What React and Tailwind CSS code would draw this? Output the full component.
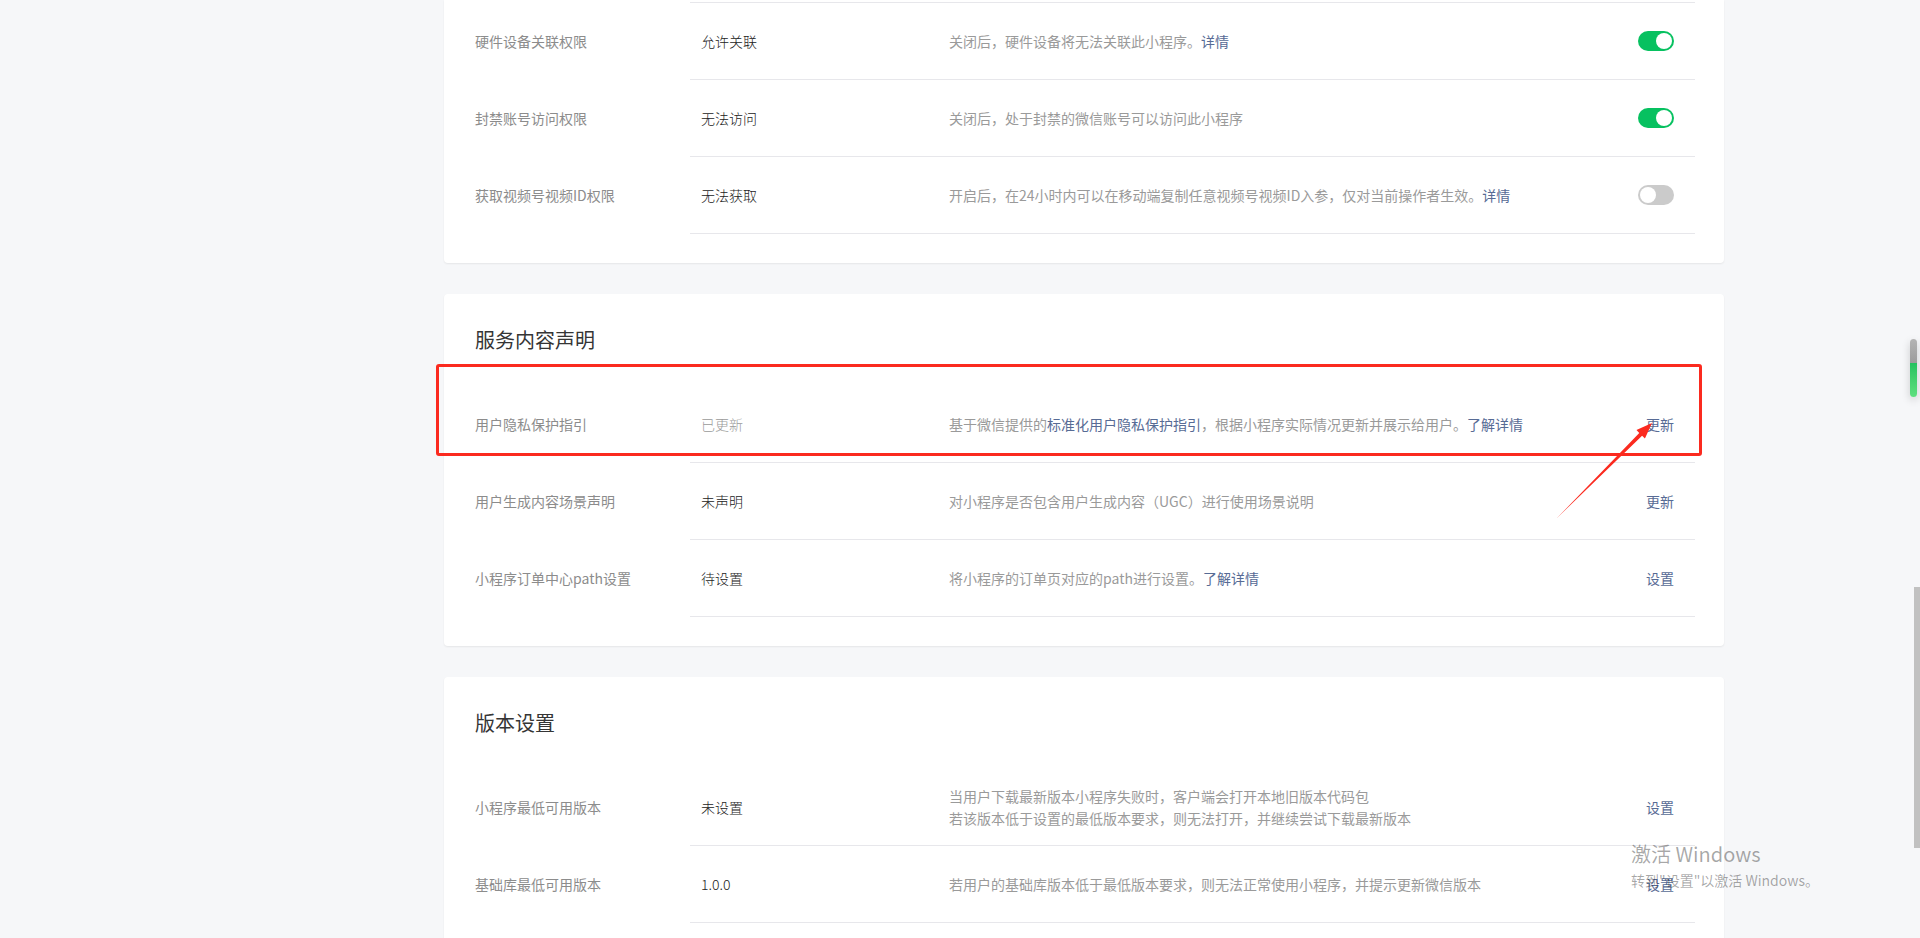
import React from 'react'

const LINK = 'text-[#576b95]'

function Toggle({ on }) {
  return (
    <span className={`flex w-[36px] h-[20px] rounded-full p-[2px] ${on ? 'bg-[#07c160] justify-end' : 'bg-[#cbcbcb] justify-start'}`}>
      <span className="w-[16px] h-[16px] rounded-full bg-white" />
    </span>
  )
}

function Row({ label, value, muted, desc, action }) {
  return (
    <div className="flex items-center">
      <div className="w-[215px] shrink-0 text-[14px] text-[#8c8c8c]">{label}</div>
      <div className="flex-1 flex items-center h-[77px] border-b border-[#e7e7eb]">
        <div className={`w-[259px] shrink-0 pl-[11px] text-[14px] font-light ${muted ? 'text-[#9a9a9a]' : 'text-[#222]'}`}>{value}</div>
        <div className="flex-1 text-[14px] leading-[22px] text-[#9a9a9a]">{desc}</div>
        <div className="pr-[21px] pl-4 text-[14px] flex justify-end">{action}</div>
      </div>
    </div>
  )
}

function Card({ title, children, first }) {
  return (
    <div className={`bg-white pl-[31px] pr-[29px] pb-[29px] shadow-[0_1px_2px_rgba(0,0,0,0.07)] ${first ? 'rounded-b-[4px] pt-[2px]' : 'rounded-[4px] pt-[32px]'}`}>
      {title && <h2 className="text-[20px] leading-[28px] text-[#353535] font-normal mb-[32px]">{title}</h2>}
      {first && <div className="ml-[215px] border-t border-[#e7e7eb]" />}
      {children}
    </div>
  )
}

export default function App() {
  return (
    <div className="relative w-full h-[938px] overflow-hidden bg-[#f6f7f9] flex font-['Noto_Sans_CJK_SC','Noto_Sans',sans-serif]">
      <div className="w-[444px] shrink-0" />
      <div className="w-[1280px] shrink-0 flex flex-col gap-[31px]">
        <Card first>
          <Row label="硬件设备关联权限" value="允许关联"
            desc={<>关闭后，硬件设备将无法关联此小程序。<a className={LINK}>详情</a></>}
            action={<Toggle on />} />
          <Row label="封禁账号访问权限" value="无法访问"
            desc="关闭后，处于封禁的微信账号可以访问此小程序"
            action={<Toggle on />} />
          <Row label="获取视频号视频ID权限" value="无法获取"
            desc={<>开启后，在24小时内可以在移动端复制任意视频号视频ID入参，仅对当前操作者生效。<a className={LINK}>详情</a></>}
            action={<Toggle />} />
        </Card>

        <Card title="服务内容声明">
          <Row label="用户隐私保护指引" value="已更新" muted
            desc={<>基于微信提供的<a className={LINK}>标准化用户隐私保护指引</a>，根据小程序实际情况更新并展示给用户。<a className={LINK}>了解详情</a></>}
            action={<a className={LINK}>更新</a>} />
          <Row label="用户生成内容场景声明" value="未声明"
            desc="对小程序是否包含用户生成内容（UGC）进行使用场景说明"
            action={<a className={LINK}>更新</a>} />
          <Row label="小程序订单中心path设置" value="待设置"
            desc={<>将小程序的订单页对应的path进行设置。<a className={LINK}>了解详情</a></>}
            action={<a className={LINK}>设置</a>} />
        </Card>

        <Card title="版本设置">
          <Row label="小程序最低可用版本" value="未设置"
            desc={<>当用户下载最新版本小程序失败时，客户端会打开本地旧版本代码包<br />若该版本低于设置的最低版本要求，则无法打开，并继续尝试下载最新版本</>}
            action={<a className={LINK}>设置</a>} />
          <Row label="基础库最低可用版本" value="1.0.0"
            desc="若用户的基础库版本低于最低版本要求，则无法正常使用小程序，并提示更新微信版本"
            action={<a className={LINK}>设置</a>} />
        </Card>
      </div>
      <div className="flex-1" />
      <div className="w-[6px] shrink-0">
        <div className="mt-[587px] h-[261px] bg-[#c1c1c1]" />
      </div>

      {/* annotation: red box + arrow */}
      <div className="absolute left-[436px] top-[364px] w-[1266px] h-[92px] border-[3px] border-[#fb2a1f] rounded-[3px]" />
      <svg className="absolute left-[1540px] top-[410px]" width="130" height="120" viewBox="0 0 130 120">
        <polygon fill="#fb2a1f" points="17,108 102.1,25.73 104.93,28.55 112,13 96.45,20.07 99.28,22.9" />
      </svg>

      {/* floating side widget */}
      <div className="absolute left-[1910px] top-[339px] w-[7px] h-[58px] rounded-full overflow-hidden flex flex-col shadow-[0_3px_8px_rgba(0,0,0,0.18)]">
        <div className="h-[24px] bg-gradient-to-b from-[#b4b4b4] to-[#9c9c9c]" />
        <div className="flex-1 bg-gradient-to-b from-[#22c25f] to-[#5ee07f]" />
      </div>

      {/* windows activation watermark */}
      <div className="absolute left-[1631px] top-[840px] text-black/35 pointer-events-none">
        <div className="text-[20px] leading-[28px]">激活 Windows</div>
        <div className="text-[14px] leading-[20px] mt-[2px]">转到"设置"以激活 Windows。</div>
      </div>
    </div>
  )
}
